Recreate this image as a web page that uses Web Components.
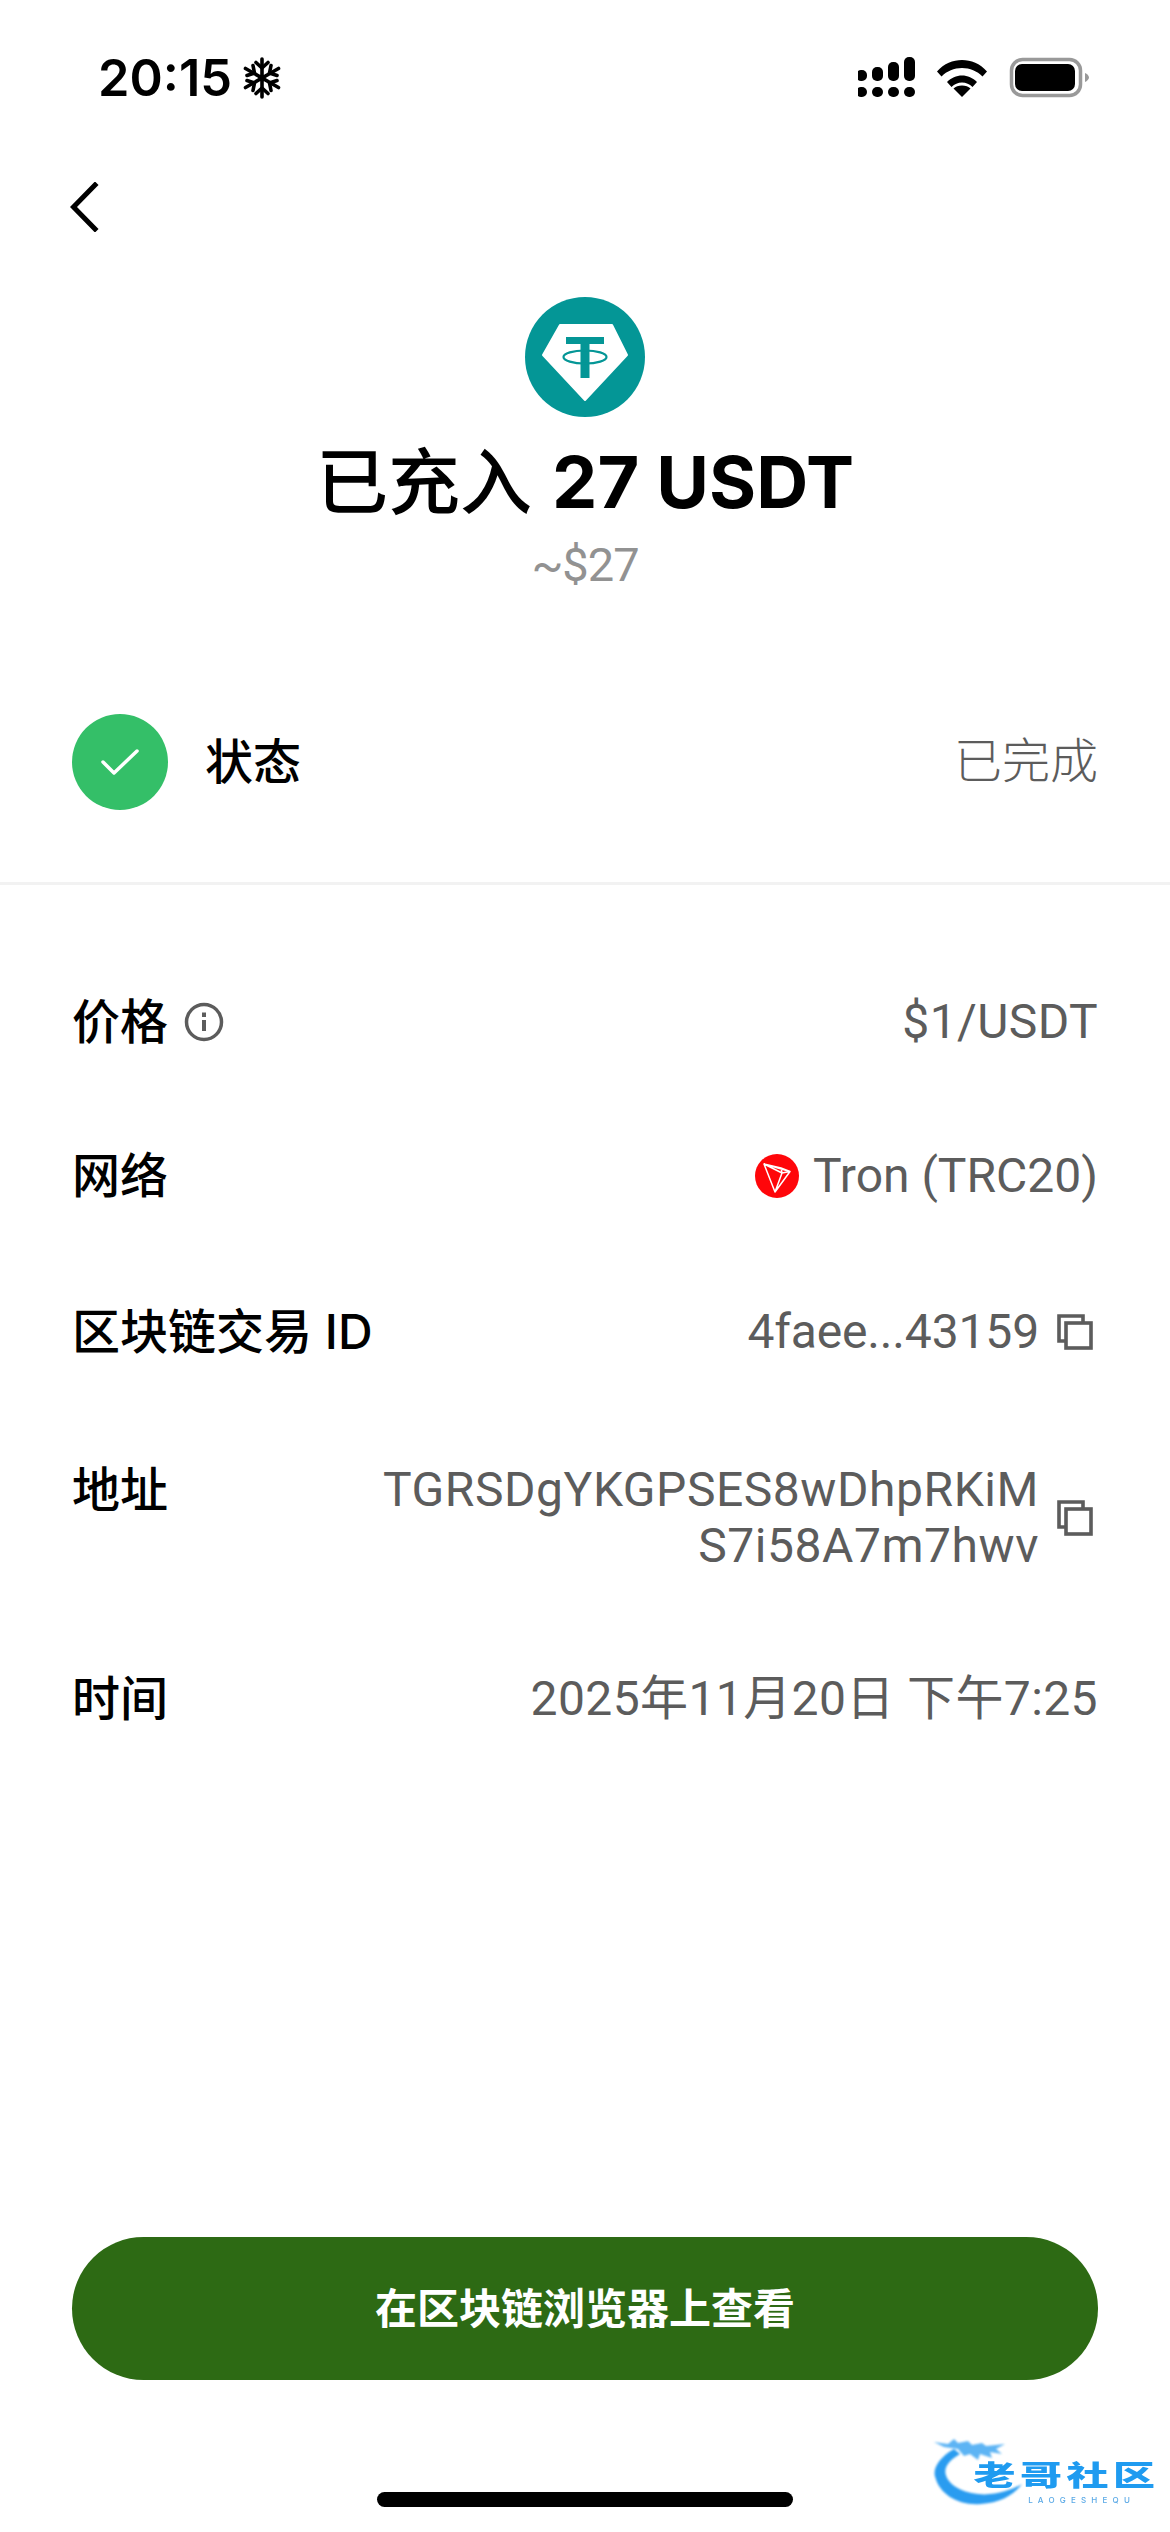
<!DOCTYPE html>
<html lang="zh">
<head>
<meta charset="utf-8">
<title>充值详情</title>
<style>
  html, body { margin: 0; background: #fff; }
  body { font-family: Inter, "Noto Sans CJK SC", sans-serif; color: #000; }
</style>
</head>
<body>
<deposit-page>
  <status-bar slot="top" time="20:15"></status-bar>
  <back-nav slot="top"></back-nav>
  <deposit-summary slot="top" verb="已充入" amount="27 USDT" fiat="~$27"></deposit-summary>
  <state-row slot="top" label="状态" value="已完成"></state-row>

  <detail-row label="价格" info>$1/USDT</detail-row>
  <detail-row label="网络" style="--track: 0"><tron-icon slot="before"></tron-icon>Tron (TRC20)</detail-row>
  <detail-row label="区块链交易 ID" copy style="--track: -.15px">4faee...43159</detail-row>
  <detail-row label="地址" copy top style="--track: .55px">TGRSDgYKGPSES8wDhpRKiM<br>S7i58A7m7hwv</detail-row>
  <detail-row label="时间">2025年11月20日 下午7:25</detail-row>

  <action-button slot="bottom">在区块链浏览器上查看</action-button>
  <home-indicator slot="bottom"></home-indicator>
  <site-mark slot="overlay"></site-mark>
</deposit-page>

<script>
class DepositPage extends HTMLElement {
  constructor() {
    super();
    this.attachShadow({ mode: "open" });
    this.shadowRoot.innerHTML = `
    <style>
      :host { display: flex; flex-direction: column; position: relative; width: 1170px; height: 2532px; overflow: hidden; background: #fff; }
      .rows { display: flex; flex-direction: column; gap: 98px; padding: 109px 72px 0; flex: 1; }
    </style>
    <slot name="top"></slot>
    <div class="rows"><slot></slot></div>
    <slot name="bottom"></slot>
    <slot name="overlay"></slot>`;
  }
}

class StatusBar extends HTMLElement {
  constructor() {
    super();
    this.attachShadow({ mode: "open" });
    this.shadowRoot.innerHTML = `
    <style>
      :host { display: flex; align-items: center; justify-content: space-between; height: 156px; padding: 0 78px 0 98px; box-sizing: border-box; }
      .left { display: flex; align-items: center; gap: 11px; font: 600 50.500px/1 Inter, sans-serif; color: #000; }
      svg { display: block; }
    </style>
    <div class="left">
      <span class="time"></span>
      <svg width="38" height="42" viewBox="0 0 38 42" fill="none" stroke="#000" stroke-width="3.6" stroke-linecap="round" stroke-linejoin="round">
        <path d="M19 2V40M2.5 11.5 35.5 30.5M35.5 11.5 2.5 30.5"/>
        <path d="M13 5.5 19 11l6-5.500M13 36.500 19 31l6 5.500"/>
        <path d="M4 18.500 11.500 16 10 8.500M34 18.500 26.500 16 28 8.500M4 23.500 11.500 26 10 33.500M34 23.500 26.500 26 28 33.500"/>
      </svg>
    </div>
    <svg width="234" height="42" viewBox="0 0 234 42">
      <g fill="#000">
        <rect x="-2" y="13" width="11" height="11" rx="5"/><rect x="14" y="10" width="11" height="14" rx="5"/>
        <rect x="30" y="5" width="11" height="19" rx="5"/><rect x="46" y="0" width="11" height="24" rx="5"/>
        <rect x="-2" y="30" width="11" height="10" rx="5"/><rect x="14" y="30" width="11" height="10" rx="5"/>
        <rect x="30" y="30" width="11" height="10" rx="5"/><rect x="46" y="30" width="11" height="10" rx="5"/>
        <path d="M79 14.500C86 6.500 95 3 104 3s18 3.500 25 11.500l-4.500 5C119 14 112 11 104 11s-15 3-20.500 8.500z"/>
        <path d="M89 25c4-4 9.500-6.500 15-6.500S115 21 119 25l-4.500 5c-3-3-6.500-4.500-10.500-4.500S96.500 27 93.500 30z"/>
        <path d="M104 40l-8.500-8.500c2-2 5-3 8.500-3s6.500 1 8.500 3z"/>
        <rect x="157" y="7" width="60" height="27" rx="7"/>
        <path d="M227 16c2 .8 4 2.700 4 4.500s-2 3.700-4 4.500z" fill="#999"/>
      </g>
      <rect x="153.500" y="2.500" width="69" height="36" rx="11" fill="none" stroke="#999" stroke-width="3.500"/>
    </svg>`;
    this.shadowRoot.querySelector(".time").textContent = this.getAttribute("time");
  }
}

class BackNav extends HTMLElement {
  constructor() {
    super();
    this.attachShadow({ mode: "open" });
    this.shadowRoot.innerHTML = `
    <style>
      :host { display: block; height: 141px; padding: 26px 0 0 70px; box-sizing: border-box; }
      svg { display: block; }
    </style>
    <svg width="30" height="50" viewBox="0 0 30 50" fill="none" stroke="#000" stroke-width="5" stroke-linecap="square"><path d="M25 3 3.500 25 25 47"/></svg>`;
  }
}

class DepositSummary extends HTMLElement {
  constructor() {
    super();
    this.attachShadow({ mode: "open" });
    this.shadowRoot.innerHTML = `
    <style>
      :host { display: flex; flex-direction: column; align-items: center; }
      svg { display: block; }
      .amount { font: 700 72px/90px Inter, "Noto Sans CJK SC", sans-serif; margin-top: 20px; color: #000; }
      .verb { font-weight: 500; }
      .num { margin-left: 3px; }
      .fiat { font: 400 47px/60px Roboto, "Noto Sans CJK SC", sans-serif; letter-spacing: -1px; color: #929292; margin-top: 8px; }
    </style>
    <svg width="120" height="120" viewBox="0 0 120 120">
      <circle cx="60" cy="60" r="60" fill="#049696"/>
      <path d="M35 28H87L102 58 60 103 18 58z" fill="#fff" stroke="#fff" stroke-width="2" stroke-linejoin="round"/>
      <g fill="#049696">
        <rect x="41" y="40" width="38" height="7"/>
        <rect x="55.500" y="45" width="9" height="36"/>
      </g>
      <ellipse cx="60" cy="60" rx="21.500" ry="6.500" fill="none" stroke="#049696" stroke-width="2.200"/>
    </svg>
    <div class="amount"><span class="verb"></span> <span class="num"></span></div>
    <div class="fiat"></div>`;
    this.shadowRoot.querySelector(".verb").textContent = this.getAttribute("verb");
    this.shadowRoot.querySelector(".num").textContent = this.getAttribute("amount");
    this.shadowRoot.querySelector(".fiat").textContent = this.getAttribute("fiat");
  }
}

class StateRow extends HTMLElement {
  constructor() {
    super();
    this.attachShadow({ mode: "open" });
    this.shadowRoot.innerHTML = `
    <style>
      :host { display: flex; align-items: center; gap: 37px; height: 290px; padding: 80px 72px 33px 72px; box-sizing: border-box; border-bottom: 3px solid #f2f2f2; }
      svg { display: block; }
      .label { font: 500 48px/56px Inter, "Noto Sans CJK SC", sans-serif; color: #000; flex: 1; }
      .value { font: 300 48px/56px Roboto, "Noto Sans CJK SC", sans-serif; color: #5c5c5c; }
    </style>
    <svg width="96" height="96" viewBox="0 0 96 96">
      <circle cx="48" cy="48" r="48" fill="#34bf68"/>
      <path d="M31 48 42 59 65 37" fill="none" stroke="#fff" stroke-width="3.500" stroke-linecap="round" stroke-linejoin="round"/>
    </svg>
    <div class="label"></div>
    <div class="value"></div>`;
    this.shadowRoot.querySelector(".label").textContent = this.getAttribute("label");
    this.shadowRoot.querySelector(".value").textContent = this.getAttribute("value");
  }
}

class DetailRow extends HTMLElement {
  constructor() {
    super();
    this.attachShadow({ mode: "open" });
    this.shadowRoot.innerHTML = `
    <style>
      :host { display: flex; justify-content: space-between; align-items: center; }
      :host([copy]) { margin-top: 2px; }
      :host([top]) { align-items: flex-start; margin-top: 4px; margin-bottom: -1px; }
      .label { display: flex; align-items: center; gap: 16px; font: 500 48px/56px Inter, "Noto Sans CJK SC", sans-serif; color: #000; }
      .right { display: flex; align-items: center; gap: 14px; }
      .value { font: 400 48px/56px Roboto, "Noto Sans CJK SC", sans-serif; letter-spacing: var(--track, .4px); color: #5c5c5c; text-align: right; }
      svg { display: block; }
      .copy { margin: 0 5px 0 4px; }
    </style>
    <div class="label"><span class="name"></span></div>
    <div class="right">
      <slot name="before"></slot>
      <div class="value"><slot></slot></div>
    </div>`;
    this.shadowRoot.querySelector(".name").textContent = this.getAttribute("label");
    if (this.hasAttribute("info")) {
      this.shadowRoot.querySelector(".label").insertAdjacentHTML("beforeend", `
      <svg width="40" height="40" viewBox="0 0 40 40" fill="none" stroke="#5c5c5c" stroke-width="3.500">
        <circle cx="20" cy="20" r="17.500"/>
        <path d="M20 18v11" stroke-width="4"/><path d="M20 10.500v4.500" stroke-width="4"/>
      </svg>`);
    }
    if (this.hasAttribute("copy")) {
      this.shadowRoot.querySelector(".right").insertAdjacentHTML("beforeend", `
      <svg class="copy" width="36" height="36" viewBox="0 0 36 36" fill="none" stroke="#5c5c5c" stroke-width="3.600">
        <path d="M8 27H2V2H26V8"/>
        <rect x="9" y="9" width="25" height="25"/>
      </svg>`);
    }
  }
}

class TronIcon extends HTMLElement {
  constructor() {
    super();
    this.attachShadow({ mode: "open" });
    this.shadowRoot.innerHTML = `
    <style>
      :host { display: block; width: 44px; height: 44px; }
      svg { display: block; }
    </style>
    <svg width="44" height="44" viewBox="0 0 44 44">
      <circle cx="22" cy="22" r="22" fill="#ff060a"/>
      <path d="M9 10 35 17.500 20 38zM9 10 26 14 35 17.500 27 19zM9 10 27 19 20 38M26 14 27 19" fill="none" stroke="#fff" stroke-width="1.500" stroke-linejoin="round"/>
    </svg>`;
  }
}

class ActionButton extends HTMLElement {
  constructor() {
    super();
    this.attachShadow({ mode: "open" });
    this.shadowRoot.innerHTML = `
    <style>
      :host { display: flex; align-items: center; justify-content: center; height: 143px; margin: 0 72px; border-radius: 72px; background: #2d6a14; color: #fff; font: 600 42px/1 Inter, "Noto Sans CJK SC", sans-serif; }
    </style>
    <slot></slot>`;
  }
}

class HomeIndicator extends HTMLElement {
  constructor() {
    super();
    this.attachShadow({ mode: "open" });
    this.shadowRoot.innerHTML = `
    <style>
      :host { display: block; height: 152px; box-sizing: border-box; padding-top: 112px; }
      div { width: 416px; height: 15px; margin: 0 auto; border-radius: 8px; background: #000; }
    </style>
    <div></div>`;
  }
}

// watermark sits over the corner of the screenshot
class SiteMark extends HTMLElement {
  constructor() {
    super();
    this.attachShadow({ mode: "open" });
    this.shadowRoot.innerHTML = `
    <style>
      :host { position: absolute; left: 930px; top: 2434px; width: 225px; height: 76px; display: flex; flex-direction: column; align-items: flex-end; padding-top: 25px; box-sizing: border-box; }
      svg { position: absolute; left: 0; top: 0; filter: blur(.8px); }
      .cn { position: relative; width: 121px; height: 30px; display: flex; justify-content: space-between; font: 900 28px/30px "Noto Sans CJK SC", sans-serif; color: #1f9bf0; transform: scaleX(1.5); transform-origin: right center; filter: blur(.5px); }
      .en { position: relative; margin: 6px 20px 0 0; font: 500 8px/10px Inter, sans-serif; letter-spacing: 5.200px; color: #5aa9e6; filter: blur(.4px); }
    </style>
    <svg width="100" height="76" viewBox="0 0 100 76">
      <path d="M24 15C8 24 2 36 5.500 44 10 60 28 72 51 70c18-1 32-8 41-20-10 6-28 12-44 10C30 58 18 50 15.600 40 14 32 20 26 30 20z" fill="#2a9cf0"/>
      <path d="M4 8 18 10 24 5 28 9 38 7 42 11 52 9 56 12 75 10 66 15 72 20 60 18 62 24 50 20 48 26 40 20 34 22 28 15 14 13z" fill="#5db4f4"/>
    </svg>
    <div class="cn"><span>老</span><span>哥</span><span>社</span><span>区</span></div>
    <div class="en">LAOGESHEQU</div>`;
  }
}

customElements.define("deposit-page", DepositPage);
customElements.define("status-bar", StatusBar);
customElements.define("back-nav", BackNav);
customElements.define("deposit-summary", DepositSummary);
customElements.define("state-row", StateRow);
customElements.define("detail-row", DetailRow);
customElements.define("tron-icon", TronIcon);
customElements.define("action-button", ActionButton);
customElements.define("home-indicator", HomeIndicator);
customElements.define("site-mark", SiteMark);
</script>
</body>
</html>
